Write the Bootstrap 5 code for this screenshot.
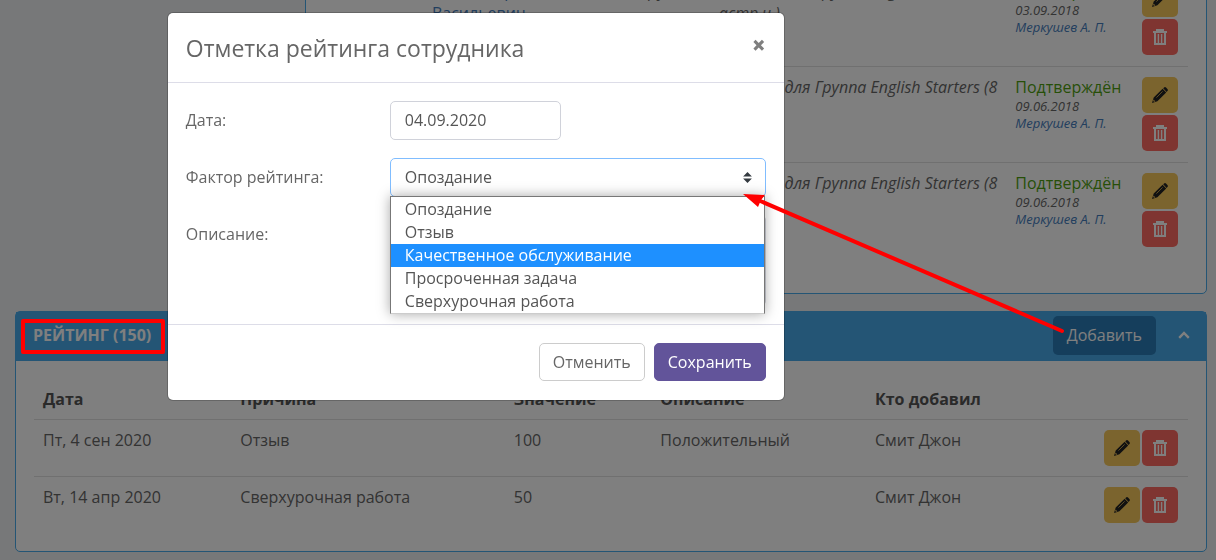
<!DOCTYPE html>
<html lang="ru">
<head>
<meta charset="utf-8">
<meta name="viewport" content="width=device-width, initial-scale=1">
<title>Рейтинг сотрудника</title>
<link href="https://cdn.jsdelivr.net/npm/bootstrap@5.3.0/dist/css/bootstrap.min.css" rel="stylesheet">
<style>
  body { font-family: "Open Sans", "Noto Sans", sans-serif; font-size: 16px; line-height: 22px; color: #666; background: #eef0f3; }
  a { color: #447cbc; text-decoration: none; }
  .page { padding: 0 9px 8px 15px; }
  .panel { border: 1px solid #48aaea; border-radius: 5px; background: #fff; }
  .panel-body { padding: 18px; }
  .panel-lessons { margin: -49px 0 17px 24.3%; }
  .panel-lessons .panel-body { padding-bottom: 34px; }
  .panel-head { background: #48aaea; color: #fff; padding: 4px 16px 6px 17px; min-height: 49px; }
  .panel-title { font-size: 16px; font-weight: 700; line-height: 22px; margin: 0; }
  .btn-add { background: #2a7cb8; color: #fff; padding: 8px 14px; line-height: 23px; border: 0; border-radius: 5px; margin-right: 22px; }
  .btn-fold { border: 0; background: none; padding: 0; color: #fff; line-height: 0; }
  .grid-table { width: 100%; table-layout: fixed; margin: 0; }
  .grid-table th, .grid-table td { padding: 9px; vertical-align: top; border-top: 1px solid #e0e0e0; }
  .panel-lessons .grid-table td { padding: 9px 0 9px 8px; }
  .grid-table thead th { border-top: 0; color: #555; font-weight: 700; }
  .grid-table td.tools, .panel-lessons .grid-table td.tools { padding: 10px 10px 10px 0; }
  .tool-pair { gap: 2px; }
  .panel-lessons tr { height: 96px; }
  .panel-lessons .grid-table tr:first-child td { border-top-color: transparent; }
  .status-ok { color: #4f9f10; }
  .stamp { font-size: 13px; line-height: 17px; font-style: italic; display: block; }
  .btn-tool { width: 36px; height: 36px; border: 0; border-radius: 5px; padding: 0; display: inline-flex; align-items: center; justify-content: center; }
  .btn-edit { background: #f6c85c; color: #222; }
  .btn-del { background: #ff6a62; color: #fff; }
  .dlg { max-width: 616px; margin: 13px 0 0 13.8%; }
  .dlg .modal-content { border-radius: 5px; border: 0; color: #666; box-shadow: 0 0 0 1px rgba(0,0,0,.2); }
  .dlg .modal-header { padding: 18px 18px 17px; border-color: #dddde8; }
  .dlg .modal-title { font-size: 23px; line-height: 34px; font-weight: 400; }
  .dlg .modal-body { padding: 18px; }
  .dlg .modal-footer { padding: 18px 18px 19px; gap: 9px; border-color: #dddde8; }
  .dlg .modal-footer .btn { margin: 0; }
  .x-btn { border: 0; background: none; padding: 2px 0 0; font-size: 24px; line-height: 24px; font-weight: 800; color: #7f7f7f; }
  .form-rows { display: grid; gap: 18px; }
  .form-rows .row { --bs-gutter-x: 32px; }
  .form-rows label { padding-top: 8px; padding-bottom: 8px; }
  .field { height: 39px; font-size: 16px; line-height: 23px; padding: 6px 14px 8px; border: 1px solid #d0d2da; border-radius: 5px; color: #555; }
  .field-date { max-width: 171px; }
  select.field { appearance: none; padding: 7px 14px; border-color: #80bdff; background: #fff url("data:image/svg+xml,%3Csvg xmlns='http://www.w3.org/2000/svg' viewBox='0 0 4 5'%3E%3Cpath fill='%23343a40' d='M2 0L0 2h4zm0 5L0 3h4z'/%3E%3C/svg%3E") no-repeat right 13px center / 9px 11px; }
  textarea.field { height: 91px; resize: none; }
  .options { top: 38px; left: 0; right: 1px; z-index: 5; margin: 0; padding: 1px 0 0; list-style: none; background: #fff; color: #555; border: 1px solid #777; border-bottom-color: #ccc; box-shadow: 0 0 12px rgba(0,0,0,.35); }
  .options li { padding: 0 14px; line-height: 23px; }
  .options li.on { background: #1e90ff; color: #fff; }
  .btn-cancel { border: 1px solid #ccc; color: #666; background: #fff; }
  .btn-save { border: 1px solid #62549a; color: #fff; background: #62549a; }
  .btn-cancel, .btn-save { padding: 7px 13px; line-height: 22px; border-radius: 5px; }
  .notes { position: fixed; top: 0; left: 0; z-index: 2000; pointer-events: none; }
</style>
</head>
<body class="overflow-hidden">
<svg class="d-none" aria-hidden="true">
  <symbol id="i-pencil" viewBox="0 0 16 16"><path fill="currentColor" d="M11.2 1.3 12.4.3q.8-.5 1.6.2l1.6 1.7q.6.8 0 1.6l-1 1.1zM10.6 1.8 14.2 5.4 5.4 14.3 0 16l1.7-5.4z"/><path stroke="#f6c85c" stroke-width=".7" d="M4.4 10.6 10.6 4.4"/><path fill="#f6c85c" d="m1.6 12.6 1.8 1.8-1.3.4-.9-.9z"/></symbol>
  <symbol id="i-trash" viewBox="0 0 14 16"><path fill="none" stroke="currentColor" stroke-width="2" d="M0 3h14M4 2.500V1h6v1.500M2 3v12h10V3"/><path fill="none" stroke="currentColor" stroke-width="1.4" d="M5.400 5v9M8.600 5v9"/></symbol>
</svg>

<main class="page">
  <section class="panel panel-lessons">
    <div class="panel-body">
      <table class="grid-table">
        <colgroup><col style="width:11.6%"><col style="width:21.2%"><col style="width:12%"><col style="width:34.3%"><col style="width:14.7%"><col style="width:6.2%"></colgroup>
        <tbody>
          <tr><td></td><td><a href="#">Александр Васильевич</a></td><td>500 руб.</td><td><em>Оплата для Группа English Starters (8 астр.ч.)</em></td>
            <td><span class="status-ok">Подтверждён</span><span class="stamp">03.09.2018</span><a class="stamp" href="#">Меркушев А. П.</a></td>
            <td class="tools"><div class="tool-pair d-flex flex-column align-items-end"><button class="btn-tool btn-edit" aria-label="Изменить"><svg width="16" height="16"><use href="#i-pencil"/></svg></button><button class="btn-tool btn-del" aria-label="Удалить"><svg width="14" height="16"><use href="#i-trash"/></svg></button></div></td></tr>
          <tr><td></td><td></td><td></td><td><em>Оплата для Группа English Starters (8 астр.ч.)</em></td>
            <td><span class="status-ok">Подтверждён</span><span class="stamp">09.06.2018</span><a class="stamp" href="#">Меркушев А. П.</a></td>
            <td class="tools"><div class="tool-pair d-flex flex-column align-items-end"><button class="btn-tool btn-edit" aria-label="Изменить"><svg width="16" height="16"><use href="#i-pencil"/></svg></button><button class="btn-tool btn-del" aria-label="Удалить"><svg width="14" height="16"><use href="#i-trash"/></svg></button></div></td></tr>
          <tr><td></td><td></td><td></td><td><em>Оплата для Группа English Starters (8 астр.ч.)</em></td>
            <td><span class="status-ok">Подтверждён</span><span class="stamp">09.06.2018</span><a class="stamp" href="#">Меркушев А. П.</a></td>
            <td class="tools"><div class="tool-pair d-flex flex-column align-items-end"><button class="btn-tool btn-edit" aria-label="Изменить"><svg width="16" height="16"><use href="#i-pencil"/></svg></button><button class="btn-tool btn-del" aria-label="Удалить"><svg width="14" height="16"><use href="#i-trash"/></svg></button></div></td></tr>
        </tbody>
      </table>
    </div>
  </section>

  <section class="panel">
    <div class="panel-head d-flex align-items-center">
      <h2 class="panel-title me-auto">РЕЙТИНГ (150)</h2>
      <button class="btn btn-add" type="button">Добавить</button>
      <button class="btn-fold" type="button" aria-label="Свернуть"><svg width="12" height="8" viewBox="0 0 12 8" fill="none" stroke="currentColor" stroke-width="2.4"><path d="m1.2 6.8 4.8-4.8 4.8 4.8"/></svg></button>
    </div>
    <div class="panel-body">
      <table class="grid-table">
        <colgroup><col style="width:17.1%"><col style="width:23.7%"><col style="width:12.7%"><col style="width:18.6%"><col style="width:17.9%"><col style="width:10%"></colgroup>
        <thead><tr><th>Дата</th><th>Причина</th><th>Значение</th><th>Описание</th><th>Кто добавил</th><th></th></tr></thead>
        <tbody>
          <tr><td>Пт, 4 сен 2020</td><td>Отзыв</td><td>100</td><td>Положительный</td><td>Смит Джон</td>
            <td class="tools"><div class="tool-pair d-flex justify-content-end"><button class="btn-tool btn-edit" aria-label="Изменить"><svg width="16" height="16"><use href="#i-pencil"/></svg></button><button class="btn-tool btn-del" aria-label="Удалить"><svg width="14" height="16"><use href="#i-trash"/></svg></button></div></td></tr>
          <tr><td>Вт, 14 апр 2020</td><td>Сверхурочная работа</td><td>50</td><td></td><td>Смит Джон</td>
            <td class="tools"><div class="tool-pair d-flex justify-content-end"><button class="btn-tool btn-edit" aria-label="Изменить"><svg width="16" height="16"><use href="#i-pencil"/></svg></button><button class="btn-tool btn-del" aria-label="Удалить"><svg width="14" height="16"><use href="#i-trash"/></svg></button></div></td></tr>
        </tbody>
      </table>
    </div>
  </section>
</main>

<div class="modal-backdrop show"></div>
<div class="modal d-block overflow-hidden" role="dialog" aria-labelledby="dlg-title">
  <div class="modal-dialog dlg">
    <form class="modal-content">
      <div class="modal-header align-items-start">
        <h1 class="modal-title" id="dlg-title">Отметка рейтинга сотрудника</h1>
        <button type="button" class="x-btn ms-auto" aria-label="Закрыть">×</button>
      </div>
      <div class="modal-body">
        <div class="form-rows">
          <div class="row">
            <label class="col-4" for="f-date">Дата:</label>
            <div class="col-8"><input id="f-date" class="field field-date w-100 d-block" type="text" value="04.09.2020"></div>
          </div>
          <div class="row">
            <label class="col-4" for="f-factor">Фактор рейтинга:</label>
            <div class="col-8">
              <div class="position-relative">
                <select id="f-factor" class="field w-100 d-block"><option>Опоздание</option><option>Отзыв</option><option>Качественное обслуживание</option><option>Просроченная задача</option><option>Сверхурочная работа</option></select>
                <ul class="options position-absolute" role="listbox" aria-label="Фактор рейтинга">
                  <li role="option">Опоздание</li>
                  <li role="option">Отзыв</li>
                  <li role="option" class="on" aria-selected="true">Качественное обслуживание</li>
                  <li role="option">Просроченная задача</li>
                  <li role="option">Сверхурочная работа</li>
                </ul>
              </div>
            </div>
          </div>
          <div class="row">
            <label class="col-4" for="f-text">Описание:</label>
            <div class="col-8"><textarea id="f-text" class="field w-100 d-block"></textarea></div>
          </div>
        </div>
      </div>
      <div class="modal-footer">
        <button type="button" class="btn btn-cancel">Отменить</button>
        <button type="submit" class="btn btn-save">Сохранить</button>
      </div>
    </form>
  </div>
</div>

<svg class="notes" width="1216" height="560" viewBox="0 0 1216 560" fill="none" stroke="red" stroke-width="4" aria-hidden="true">
  <rect x="23" y="321" width="140" height="31" stroke-linejoin="round"/>
  <path d="M758 200 1062 331" stroke-linecap="round"/>
  <path d="m743 194 22 1-4 5-3 7z" fill="red" stroke="none"/>
</svg>
<script src="https://cdn.jsdelivr.net/npm/bootstrap@5.3.0/dist/js/bootstrap.bundle.min.js"></script>
</body>
</html>
